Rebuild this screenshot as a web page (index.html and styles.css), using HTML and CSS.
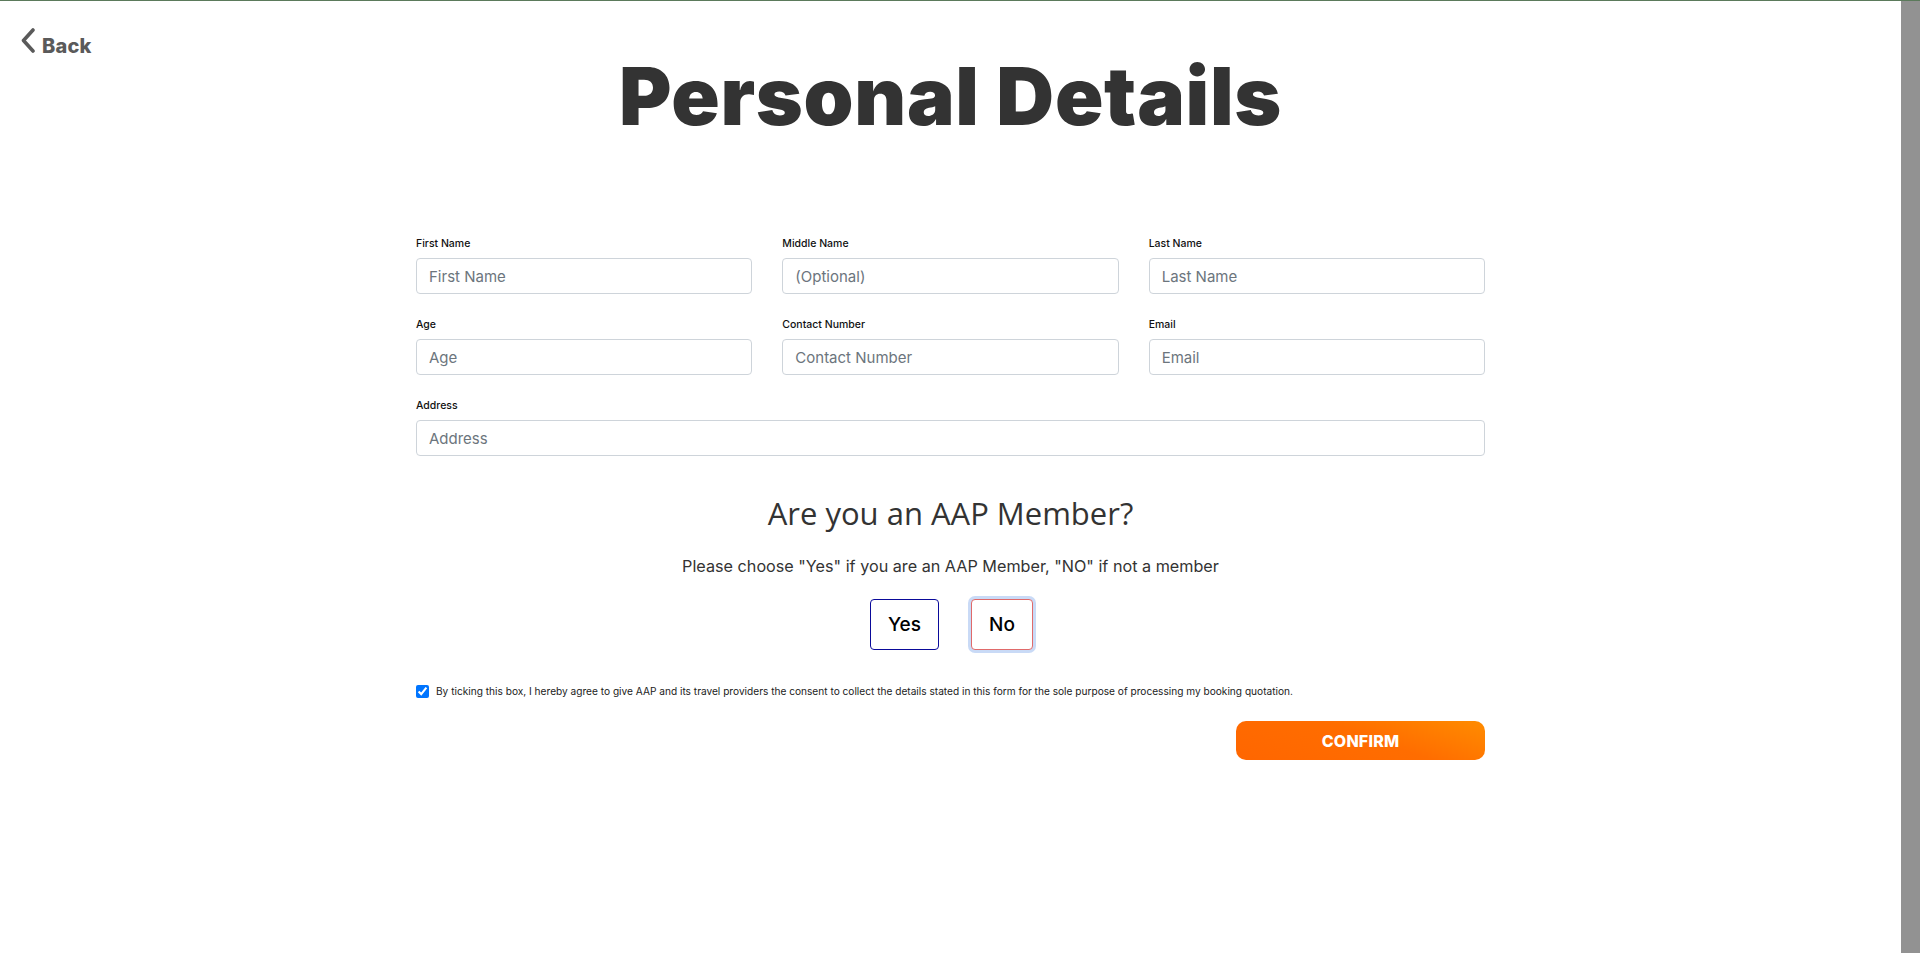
FILE: index.html
```html
<!DOCTYPE html>
<html lang="en">
<head>
<meta charset="utf-8">
<title>Personal Details</title>
<link rel="stylesheet" href="styles.css">
</head>
<body>
<div class="frame">
  <main class="page">
    <a class="back" href="#">
      <svg class="back-icon" width="16" height="25" viewBox="0 0 16 25" aria-hidden="true"><path d="M13 2 L3.5 12.5 L13 23" fill="none" stroke="#5a5a5a" stroke-width="3.6" stroke-linecap="round" stroke-linejoin="round"/></svg>
      <span class="back-text">Back</span>
    </a>
    <h1 class="title">Personal Details</h1>

    <form class="form">
      <div class="grid">
        <div class="field">
          <label class="label">First Name</label>
          <input class="input" type="text" placeholder="First Name">
        </div>
        <div class="field">
          <label class="label">Middle Name</label>
          <input class="input" type="text" placeholder="(Optional)">
        </div>
        <div class="field">
          <label class="label">Last Name</label>
          <input class="input" type="text" placeholder="Last Name">
        </div>
        <div class="field">
          <label class="label">Age</label>
          <input class="input" type="text" placeholder="Age">
        </div>
        <div class="field">
          <label class="label">Contact Number</label>
          <input class="input" type="text" placeholder="Contact Number">
        </div>
        <div class="field">
          <label class="label">Email</label>
          <input class="input" type="text" placeholder="Email">
        </div>
        <div class="field field-wide">
          <label class="label">Address</label>
          <input class="input" type="text" placeholder="Address">
        </div>
      </div>

      <section class="member">
        <h2 class="member-title">Are you an AAP Member?</h2>
        <p class="member-text">Please choose "Yes" if you are an AAP Member, "NO" if not a member</p>
        <div class="choices">
          <button type="button" class="choice choice-yes">Yes</button>
          <button type="button" class="choice choice-no">No</button>
        </div>
      </section>

      <label class="consent">
        <input class="consent-box" type="checkbox" checked>
        <span class="consent-text">By ticking this box, I hereby agree to give AAP and its travel providers the consent to collect the details stated in this form for the sole purpose of processing my booking quotation.</span>
      </label>

      <div class="actions">
        <button type="button" class="confirm">CONFIRM</button>
      </div>
    </form>
  </main>
  <div class="scrollbar"></div>
</div>
</body>
</html>
```

FILE: styles.css
```css
* { box-sizing: border-box; }

html, body {
  margin: 0;
  padding: 0;
  height: 100%;
  overflow: hidden;
}

body {
  font-family: Inter, "Noto Sans", sans-serif;
  color: #212529;
  background: #fff;
  border-top: 1px solid #5b7a5b;
}

.frame {
  display: flex;
  height: 952px;
}

.page {
  flex: 1;
  min-width: 0;
}

.scrollbar {
  width: 19px;
  background: #929292;
}

.back {
  display: inline-flex;
  align-items: flex-end;
  gap: 6px;
  margin: 27px 0 0 20px;
  text-decoration: none;
  color: #5a5a5a;
}

.back-icon { display: block; }

.back-text {
  font-family: Inter, sans-serif;
  font-weight: 800;
  font-size: 20px;
  line-height: 20px;
  margin-bottom: -3px;
  letter-spacing: 0.2px;
}

.title {
  margin: -9px 0 0;
  text-align: center;
  font-family: Inter, sans-serif;
  font-weight: 900;
  font-size: 80px;
  line-height: 96px;
  color: #333;
  letter-spacing: 0.7px;
}

.form {
  width: 1069px;
  margin: 93px auto 0;
}

.grid {
  display: grid;
  grid-template-columns: repeat(3, 1fr);
  column-gap: 30px;
  row-gap: 24px;
}

.field-wide { grid-column: 1 / -1; }

.label {
  display: block;
  font-size: 10.5px;
  font-weight: 500;
  color: #111;
  line-height: 14px;
  margin-bottom: 7px;
}

.input {
  display: block;
  width: 100%;
  height: 36px;
  padding: 0 12px;
  border: 1px solid #ced4da;
  border-radius: 4px;
  font-family: Inter, sans-serif;
  font-size: 15px;
  color: #495057;
  background: #fff;
}

.input::placeholder { color: #6c757d; }

.member {
  text-align: center;
  margin-top: 35px;
}

.member-title {
  margin: 0;
  font-family: "Open Sans", sans-serif;
  font-weight: 400;
  font-size: 31px;
  line-height: 44px;
  color: #333;
}

.member-text {
  margin: 20px 0 0;
  font-size: 16.2px;
  line-height: 22px;
  color: #333;
}

.choices {
  display: flex;
  justify-content: center;
  gap: 32px;
  margin-top: 22px;
  padding-left: 2px;
}

.choice {
  height: 51px;
  background: #fff;
  border-radius: 4px;
  font-family: Inter, sans-serif;
  font-size: 19px;
  font-weight: 500;
  color: #000;
  padding: 0;
}

.choice-yes {
  width: 69px;
  border: 1px solid #0a0a9a;
}

.choice-no {
  width: 62px;
  border: 1px solid #e06a6a;
  box-shadow: 0 0 0 3px rgba(100, 150, 230, 0.35);
}

.consent {
  display: flex;
  align-items: center;
  gap: 7px;
  margin-top: 34px;
}

.consent-box {
  margin: 0;
  width: 13px;
  height: 13px;
}

.consent-text {
  font-size: 10.15px;
  color: #222;
  line-height: 14px;
}

.actions {
  display: flex;
  justify-content: flex-end;
  margin-top: 23px;
}

.confirm {
  width: 249px;
  height: 39px;
  border: none;
  border-radius: 10px;
  background: linear-gradient(200deg, #ff8c00 0%, #ff6d00 45%, #ff6600 100%);
  color: #fff;
  font-family: Inter, sans-serif;
  font-weight: 800;
  font-size: 16px;
  letter-spacing: 0.2px;
}
```
